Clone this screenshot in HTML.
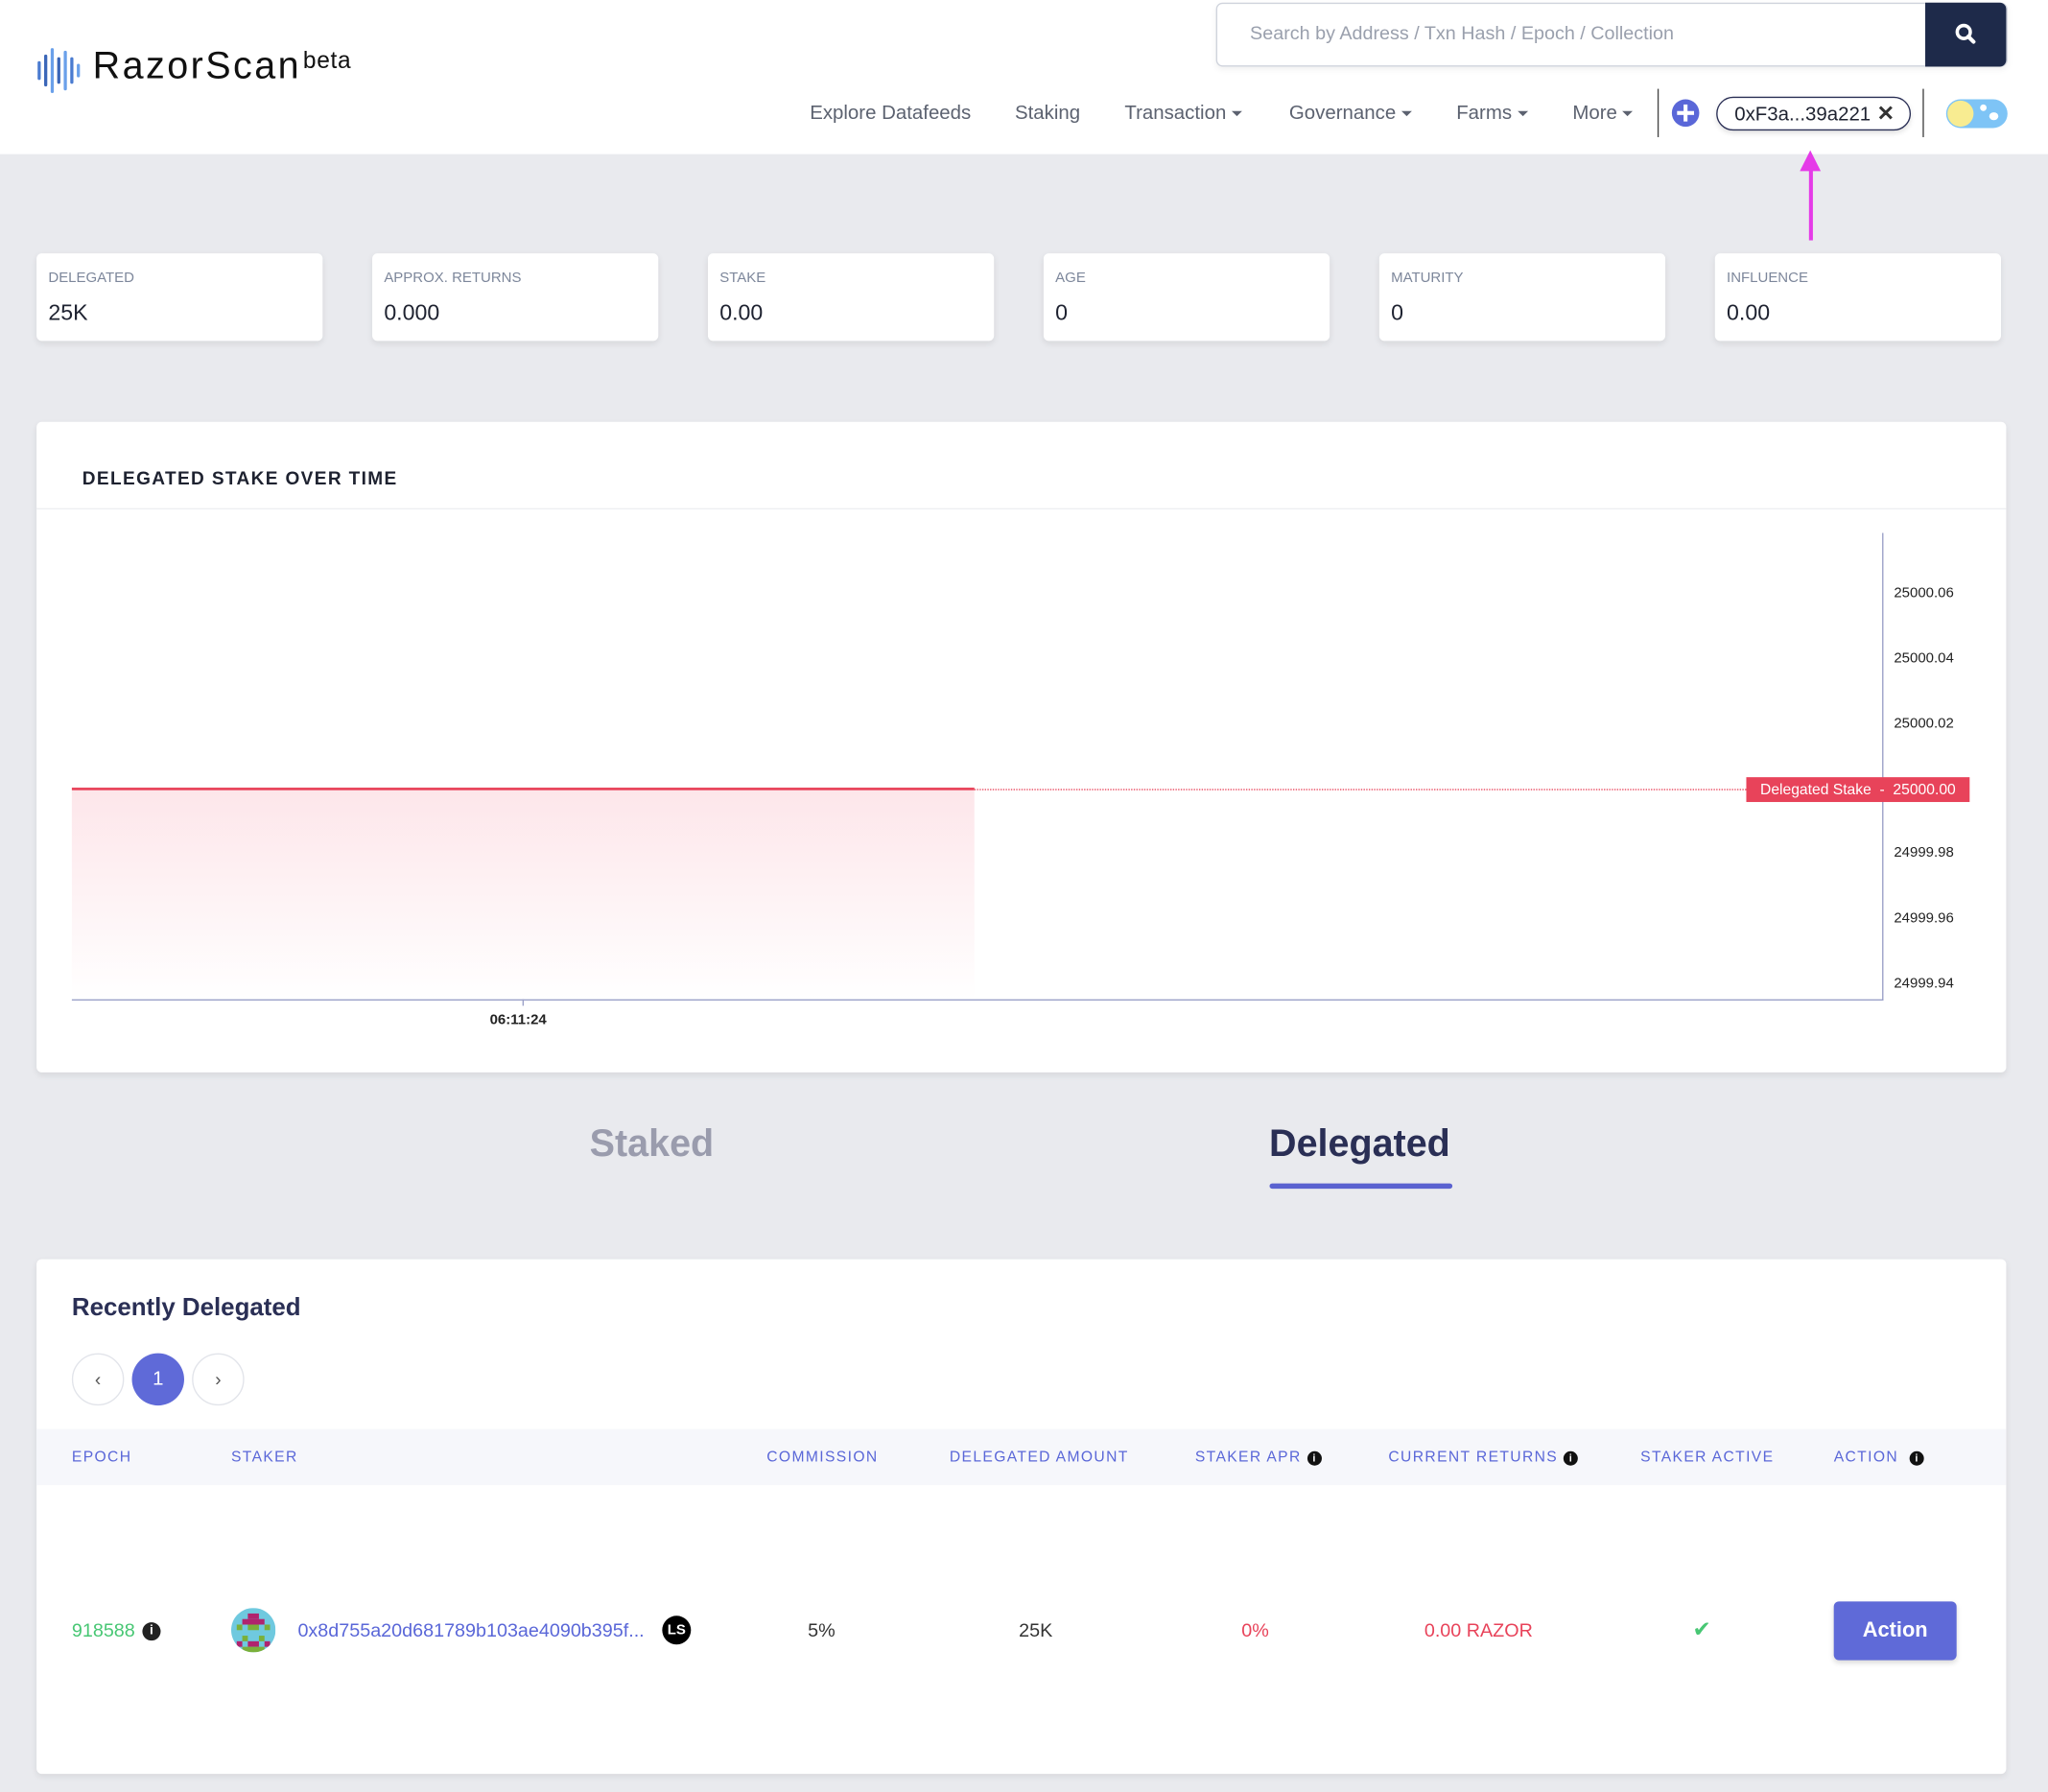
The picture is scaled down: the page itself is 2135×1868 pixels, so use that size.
<!DOCTYPE html>
<html><head><meta charset="utf-8">
<style>
html,body{margin:0;padding:0;width:2135px;height:1868px;overflow:hidden;background:#e9eaee;}
#w{position:absolute;left:0;top:0;width:1568px;height:1372px;transform:scale(1.36161);transform-origin:0 0;font-family:"Liberation Sans",sans-serif;background:#e9eaee;}
.a{position:absolute;}
.hdr{left:0;top:0;width:1568px;height:118px;background:#fff;}
.nav{top:78px;font-size:15px;color:#5c6270;}
.car{display:inline-block;width:0;height:0;border-left:4px solid transparent;border-right:4px solid transparent;border-top:4px solid #5c6270;vertical-align:middle;margin-left:4px;}
.card{background:#fff;border-radius:4px;box-shadow:0 2px 5px rgba(0,0,0,.08);}
.lbl{font-size:11px;color:#7d879b;}
.val{font-size:17px;color:#1e2230;}
.yl{font-size:11px;color:#222;left:1450px;}
.th{top:1110px;font-size:11.5px;color:#5a67d8;letter-spacing:1px;}
.td{top:1241px;font-size:14.5px;}
</style></head><body><div id="w">
<div class="a hdr"></div>
<svg class="a" style="left:28px;top:36px" width="36" height="36" viewBox="0 0 36 36">
<g stroke-linecap="round" stroke-width="2.4">
<line x1="2" y1="12" x2="2" y2="24" stroke="#4a7bd0"/><line x1="7" y1="7" x2="7" y2="29" stroke="#3a66b8"/><line x1="12" y1="2" x2="12" y2="34" stroke="#6aa0ea"/><line x1="17" y1="9" x2="17" y2="27" stroke="#3a66b8"/><line x1="22" y1="4" x2="22" y2="32" stroke="#6aa0ea"/><line x1="27" y1="9" x2="27" y2="27" stroke="#4a7bd0"/><line x1="32" y1="14" x2="32" y2="22" stroke="#6aa0ea"/>
</g></svg>
<div class="a" style="left:71px;top:35px;font-size:29px;color:#111;letter-spacing:1.8px">RazorScan</div>
<div class="a" style="left:232px;top:36px;font-size:18px;color:#111;letter-spacing:0.5px">beta</div>
<div class="a" style="left:931px;top:2px;width:604px;height:47px;border:1px solid #cfd3dc;border-radius:5px;background:#fff;box-shadow:0 2px 5px rgba(0,0,0,.06)"></div>
<div class="a" style="left:957px;top:18px;font-size:14.5px;color:#9aa0ad">Search by Address / Txn Hash / Epoch / Collection</div>
<div class="a" style="left:1474px;top:2px;width:62px;height:49px;background:#1e2a4a;border-radius:0 5px 5px 0"></div>
<svg class="a" style="left:1496px;top:17px" width="18" height="18" viewBox="0 0 18 18"><circle cx="7.5" cy="7.5" r="5" stroke="#fff" stroke-width="2.6" fill="none"/><line x1="11" y1="11" x2="15" y2="15" stroke="#fff" stroke-width="3" stroke-linecap="round"/></svg>
<div class="a nav" style="left:620px">Explore Datafeeds</div>
<div class="a nav" style="left:777px">Staking</div>
<div class="a nav" style="left:861px">Transaction<span class="car"></span></div>
<div class="a nav" style="left:987px">Governance<span class="car"></span></div>
<div class="a nav" style="left:1115px">Farms<span class="car"></span></div>
<div class="a nav" style="left:1204px">More<span class="car"></span></div>
<div class="a" style="left:1269px;top:68px;width:1px;height:37px;background:#444"></div>
<div class="a" style="left:1280px;top:76px;width:21px;height:21px;border-radius:50%;background:#5a67d8"></div>
<div class="a" style="left:1289px;top:80px;width:3px;height:13px;background:#fff"></div>
<div class="a" style="left:1284px;top:85px;width:13px;height:3px;background:#fff"></div>
<div class="a" style="left:1314px;top:74px;width:147px;height:24px;border:1.5px solid #2a2f55;border-radius:13px;box-shadow:0 2px 4px rgba(0,0,0,.12)"></div>
<div class="a" style="left:1328px;top:79px;font-size:15px;color:#1e2230">0xF3a...39a221</div>
<div class="a" style="left:1437px;top:77px;font-size:16px;font-weight:bold;color:#333">✕</div>
<div class="a" style="left:1472px;top:68px;width:1px;height:37px;background:#444"></div>
<div class="a" style="left:1490px;top:76px;width:47px;height:22px;border-radius:11px;background:#7ec4f6"></div>
<div class="a" style="left:1491px;top:77px;width:20px;height:20px;border-radius:50%;background:#f8ec91"></div>
<div class="a" style="left:1516px;top:80px;width:5px;height:5px;border-radius:50%;background:#fff"></div>
<div class="a" style="left:1523px;top:86px;width:7px;height:6px;border-radius:50%;background:#fff"></div>
<div class="a" style="left:1385px;top:128px;width:3px;height:56px;background:#e53be8"></div>
<div class="a" style="left:1378px;top:115px;width:0;height:0;border-left:8px solid transparent;border-right:8px solid transparent;border-bottom:16px solid #e53be8"></div>
<div class="a card" style="left:28px;top:194px;width:219px;height:67px"></div>
<div class="a card" style="left:285px;top:194px;width:219px;height:67px"></div>
<div class="a card" style="left:542px;top:194px;width:219px;height:67px"></div>
<div class="a card" style="left:799px;top:194px;width:219px;height:67px"></div>
<div class="a card" style="left:1056px;top:194px;width:219px;height:67px"></div>
<div class="a card" style="left:1313px;top:194px;width:219px;height:67px"></div>
<div class="a lbl" style="left:37px;top:207px">DELEGATED</div><div class="a val" style="left:37px;top:230px">25K</div>
<div class="a lbl" style="left:294px;top:207px">APPROX. RETURNS</div><div class="a val" style="left:294px;top:230px">0.000</div>
<div class="a lbl" style="left:551px;top:207px">STAKE</div><div class="a val" style="left:551px;top:230px">0.00</div>
<div class="a lbl" style="left:808px;top:207px">AGE</div><div class="a val" style="left:808px;top:230px">0</div>
<div class="a lbl" style="left:1065px;top:207px">MATURITY</div><div class="a val" style="left:1065px;top:230px">0</div>
<div class="a lbl" style="left:1322px;top:207px">INFLUENCE</div><div class="a val" style="left:1322px;top:230px">0.00</div>
<div class="a card" style="left:28px;top:323px;width:1508px;height:498px"></div>
<div class="a" style="left:63px;top:358px;font-size:14px;letter-spacing:1px;color:#1e2230;font-weight:600">DELEGATED STAKE OVER TIME</div>
<div class="a" style="left:28px;top:389px;width:1508px;height:1px;background:#eeeff2"></div>
<div class="a" style="left:55px;top:605px;width:691px;height:160px;background:linear-gradient(#fde6ea,#fff)"></div>
<div class="a" style="left:55px;top:603px;width:691px;height:2px;background:#e8435a"></div>
<div class="a" style="left:746px;top:604px;width:591px;height:0;border-top:1px dotted #e8435a"></div>
<div class="a" style="left:1441px;top:408px;width:1px;height:358px;background:#9aa0c8"></div>
<div class="a" style="left:55px;top:765px;width:1387px;height:1px;background:#9aa0c8"></div>
<div class="a" style="left:400px;top:765px;width:1px;height:5px;background:#9aa0c8"></div>
<div class="a" style="left:375px;top:775px;font-size:11px;font-weight:bold;color:#222">06:11:24</div>
<div class="a yl" style="top:448px">25000.06</div>
<div class="a yl" style="top:498px">25000.04</div>
<div class="a yl" style="top:548px">25000.02</div>
<div class="a yl" style="top:647px">24999.98</div>
<div class="a yl" style="top:697px">24999.96</div>
<div class="a yl" style="top:747px">24999.94</div>
<div class="a" style="left:1337px;top:595px;width:171px;height:19px;background:#e8435a;color:#fff;font-size:11.5px;line-height:20px;text-align:center">Delegated Stake &nbsp;-&nbsp; 25000.00</div>
<div class="a" style="left:399px;top:860px;width:200px;text-align:center;font-size:29px;color:#9a9cad;font-weight:600">Staked</div>
<div class="a" style="left:941px;top:860px;width:200px;text-align:center;font-size:29px;color:#2a2f55;font-weight:600">Delegated</div>
<div class="a" style="left:972px;top:906px;width:140px;height:4px;background:#5a62d0;border-radius:2px"></div>
<div class="a card" style="left:28px;top:964px;width:1508px;height:394px"></div>
<div class="a" style="left:55px;top:991px;font-size:19px;color:#2a2f55;font-weight:600">Recently Delegated</div>
<div class="a" style="left:55px;top:1036px;width:38px;height:38px;border-radius:50%;border:1px solid #e2e4ea;background:#fff;text-align:center;line-height:38px;color:#555;font-size:14px">‹</div>
<div class="a" style="left:101px;top:1036px;width:40px;height:40px;border-radius:50%;background:#5f6ad8;text-align:center;line-height:40px;color:#fff;font-size:15px">1</div>
<div class="a" style="left:147px;top:1036px;width:38px;height:38px;border-radius:50%;border:1px solid #e2e4ea;background:#fff;text-align:center;line-height:38px;color:#555;font-size:14px">›</div>
<div class="a" style="left:28px;top:1094px;width:1508px;height:43px;background:#f6f7fb"></div>
<div class="a th" style="left:55px">EPOCH</div>
<div class="a th" style="left:177px">STAKER</div>
<div class="a th" style="left:587px">COMMISSION</div>
<div class="a th" style="left:727px">DELEGATED AMOUNT</div>
<div class="a th" style="left:915px">STAKER APR <span style="display:inline-block;width:11px;height:11px;border-radius:50%;background:#111;color:#fff;font-size:8px;text-align:center;line-height:11px;letter-spacing:0;font-weight:bold">i</span></div>
<div class="a th" style="left:1063px">CURRENT RETURNS <span style="display:inline-block;width:11px;height:11px;border-radius:50%;background:#111;color:#fff;font-size:8px;text-align:center;line-height:11px;letter-spacing:0;font-weight:bold">i</span></div>
<div class="a th" style="left:1256px">STAKER ACTIVE</div>
<div class="a th" style="left:1404px">ACTION &nbsp;<span style="display:inline-block;width:11px;height:11px;border-radius:50%;background:#111;color:#fff;font-size:8px;text-align:center;line-height:11px;letter-spacing:0;font-weight:bold">i</span></div>
<div class="a td" style="left:55px;color:#48c774">918588</div>
<div class="a" style="left:109px;top:1242px;width:14px;height:14px;border-radius:50%;background:#222;color:#fff;font-size:10px;font-weight:bold;text-align:center;line-height:14px">i</div>
<svg class="a" style="left:177px;top:1231px" width="34" height="34" viewBox="0 0 8 8"><defs><clipPath id="c"><circle cx="4" cy="4" r="4"/></clipPath></defs><g clip-path="url(#c)"><rect width="8" height="8" fill="#6fc9df"/><rect x="3" y="1" width="2" height="1" fill="#b0246e"/><rect x="2" y="2" width="4" height="1" fill="#b0246e"/><rect x="1" y="3" width="1" height="1" fill="#7ab03a"/><rect x="3" y="3" width="2" height="1" fill="#7ab03a"/><rect x="6" y="3" width="1" height="1" fill="#7ab03a"/><rect x="2" y="5" width="1" height="1" fill="#7ab03a"/><rect x="5" y="5" width="1" height="1" fill="#7ab03a"/><rect x="1" y="6" width="1" height="1" fill="#b0246e"/><rect x="3" y="6" width="2" height="1" fill="#b0246e"/><rect x="6" y="6" width="1" height="1" fill="#b0246e"/><rect x="2" y="7" width="4" height="1" fill="#7ab03a"/></g></svg>
<div class="a td" style="left:228px;color:#5a67d8">0x8d755a20d681789b103ae4090b395f...</div>
<div class="a" style="left:507px;top:1237px;width:22px;height:22px;border-radius:50%;background:#000;color:#fff;font-size:11px;font-weight:bold;text-align:center;line-height:22px">LS</div>
<div class="a td" style="left:579px;width:100px;text-align:center;color:#333">5%</div>
<div class="a td" style="left:743px;width:100px;text-align:center;color:#333">25K</div>
<div class="a td" style="left:911px;width:100px;text-align:center;color:#e8435a">0%</div>
<div class="a td" style="left:1062px;width:140px;text-align:center;color:#e8435a">0.00 RAZOR</div>
<div class="a td" style="left:1253px;width:100px;text-align:center;color:#48c774;font-size:17px;top:1238px">✔</div>
<div class="a" style="left:1404px;top:1226px;width:94px;height:45px;background:#5f6ad8;border-radius:4px;color:#fff;font-size:16px;font-weight:bold;text-align:center;line-height:45px;box-shadow:0 2px 4px rgba(0,0,0,.15)">Action</div>
</div></body></html>
